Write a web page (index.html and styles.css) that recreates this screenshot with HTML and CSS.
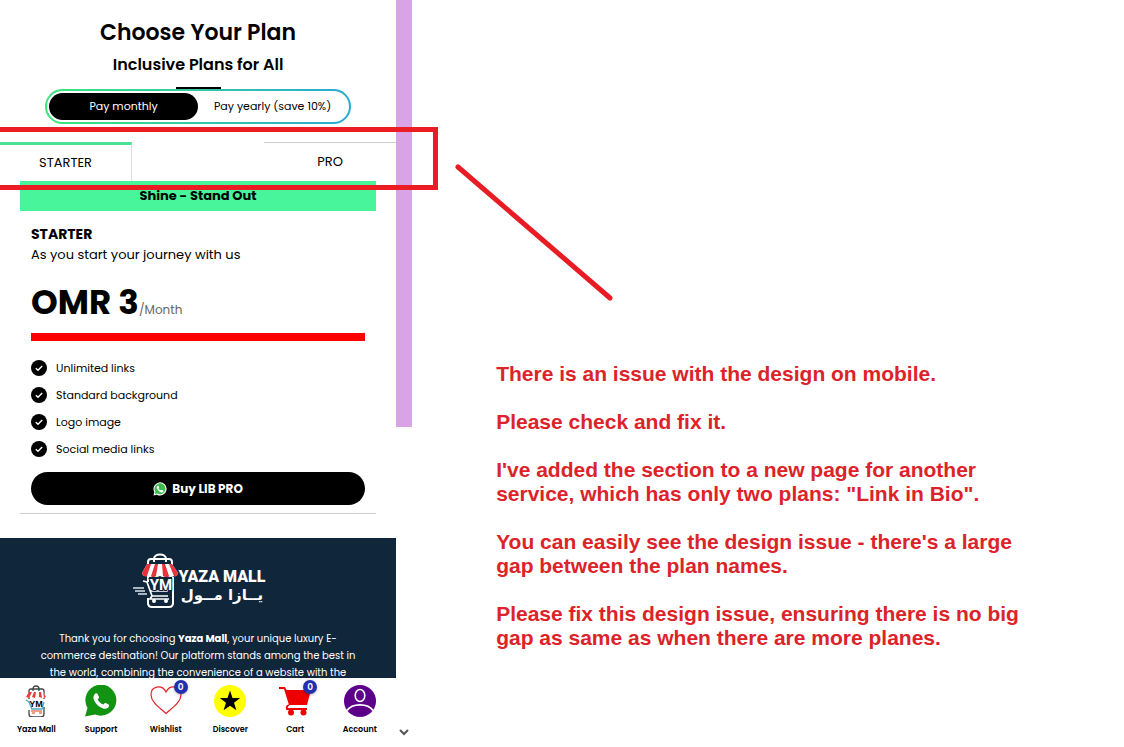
FILE: index.html
```html
<!DOCTYPE html>
<html lang="en">
<head>
<meta charset="utf-8">
<meta name="viewport" content="width=device-width, initial-scale=1">
<title>Choose Your Plan</title>
<link rel="stylesheet" href="styles.css">
</head>
<body>
<svg class="symbols" aria-hidden="true">
  <symbol id="check" viewBox="0 0 16 16">
    <circle cx="8" cy="8" r="8" fill="#000"/>
    <path d="M4.8 8.2 7 10.3 11.2 6" fill="none" stroke="#fff" stroke-width="1.4"/>
  </symbol>
  <symbol id="handset" viewBox="0 0 32 32">
    <path d="M9.500 9.500C10.500 8 12 8 12.700 9.200L14 12C14.300 13 13.200 13.800 12.700 14.600C14 17 15.700 18.600 18.200 19.600C19 18.900 19.800 17.600 20.700 18L23.600 19.500C24.500 20.200 24 22.200 22.700 23.100C20.500 24.600 17.600 23.600 15 22C12 20 10 17.500 8.900 15C8 12.800 8.400 10.900 9.500 9.500Z"/>
  </symbol>
</svg>

<div class="page">
  <div class="phone">
    <main class="screen">
      <section class="plans">
        <h1 class="title">Choose Your Plan</h1>
        <h2 class="subtitle">Inclusive Plans for All</h2>
        <div class="rule"></div>
        <div class="billing">
          <button class="billing-option billing-active" type="button">Pay monthly</button>
          <button class="billing-option" type="button">Pay yearly (save 10%)</button>
        </div>
        <div class="tabs" role="tablist">
          <button class="tab tab-active" type="button" role="tab" aria-selected="true">STARTER</button>
          <span></span>
          <button class="tab" type="button" role="tab" aria-selected="false">PRO</button>
        </div>
        <article class="card">
          <div class="ribbon">Shine - Stand Out</div>
          <div class="card-body">
            <h3 class="plan-name">STARTER</h3>
            <p class="plan-text">As you start your journey with us</p>
            <p class="price"><strong class="amount">OMR 3</strong><span class="period">/Month</span></p>
            <div class="bar"></div>
            <ul class="features">
              <li class="feature"><svg class="check"><use href="#check"/></svg>Unlimited links</li>
              <li class="feature"><svg class="check"><use href="#check"/></svg>Standard background</li>
              <li class="feature"><svg class="check"><use href="#check"/></svg>Logo image</li>
              <li class="feature"><svg class="check"><use href="#check"/></svg>Social media links</li>
            </ul>
            <button class="buy" type="button">
              <svg class="buy-icon" viewBox="0 0 32 32" aria-hidden="true">
                <path d="M1 31 3 23A15 15 0 1 1 9 29Z" fill="#fff"/>
                <path d="M4 28 5.500 22.500A12.500 12.500 0 1 1 9.800 26.500Z" fill="#3dbb4e"/>
                <use href="#handset" fill="#fff"/>
              </svg>
              Buy LIB PRO
            </button>
          </div>
        </article>
      </section>

      <footer class="footer">
        <svg class="logo" viewBox="0 0 136 58" role="img" aria-label="Yaza Mall">
          <path d="M24 10V7C24 1 36 1 36 7V10M18 30V10Q18 7 21 7H39Q42 7 42 10V14M43 25V51Q43 55 39 55H22Q18 55 18 51V46" fill="none" stroke="#fff" stroke-width="2"/>
          <path d="M17 12H42L48 21Q47 25 44 24Q41 26 37 24Q33 26 30 24Q26 26 23 24Q20 26 17 24Q13 25 12 21Z" fill="#fff"/>
          <path d="M17 12H21L17 24Q13 25 12 21ZM25 12H28L26 24Q23 26 21 24ZM32 12H35L39 24Q36 26 33 24ZM39 12H42L48 21Q47 25 44 24Z" fill="#e8333b"/>
          <path d="M3 36H14M5 39H15M8 42H17" stroke="#aab5bf" stroke-width="2"/>
          <path d="M13 29 17 30 22 44H38M20 39H37L41 31M22 44 20 47H39" fill="none" stroke="#fff" stroke-width="1.700"/>
          <circle cx="24" cy="49" r="2" fill="#fff"/><circle cx="36" cy="49" r="2" fill="#fff"/>
          <text class="logo-mark" x="31" y="38" text-anchor="middle">YM</text>
          <text class="logo-name" x="92" y="30" text-anchor="middle">YAZA MALL</text>
          <text class="logo-arabic" x="92" y="48" text-anchor="middle">يــازا مــول</text>
        </svg>
        <p class="about">Thank you for choosing <b>Yaza Mall</b>, your unique luxury E-<br>commerce destination! Our platform stands among the best in<br>the world, combining the convenience of a website with the</p>
      </footer>
    </main>

    <nav class="dock">
      <a class="dock-item" href="#">
        <svg class="dock-icon" viewBox="0 0 32 32" aria-hidden="true">
          <path d="M13 6V4Q13 1 16 1T19 4V6M9 14V6Q9 4 11 4H22Q24 4 24 6V14M24 22V29Q24 32 21 32H12Q9 32 9 29V25" fill="none" stroke="#444" stroke-width="1.300"/>
          <path d="M9 7H23L26 12Q25 14 22 12Q19 14 16 12Q13 14 10 12Q7 14 6 12Z" fill="#fff"/>
          <path d="M9 7H12L9 13 6 12ZM14 7H16L15 13 12 12ZM19 7H21L22 13 19 12ZM23 7 26 12 24 13Z" fill="#e93a3d"/>
          <path d="M6 15 9 17 12 24H22L24 17" fill="none" stroke="#4aa8c8" stroke-width="1.300"/>
          <path d="M11 26H22M12 28H15M19 28H22" stroke="#ef7d55" stroke-width="1.300"/>
          <text class="dock-mark" x="16" y="22" text-anchor="middle">YM</text>
        </svg>
        <span>Yaza Mall</span>
      </a>
      <a class="dock-item" href="#">
        <svg class="dock-icon" viewBox="0 0 32 32" aria-hidden="true">
          <path d="M0 31.500 2.500 23A15.500 15.500 0 1 1 10 29.500Z" fill="#129412"/>
          <use href="#handset" fill="#fff"/>
        </svg>
        <span>Support</span>
      </a>
      <a class="dock-item" href="#">
        <svg class="dock-icon" viewBox="0 0 32 32" aria-hidden="true">
          <path d="M16 28.500C11 23.500 1 18 1 9.500C1 1 12 -1 16 7C20 -1 31 1 31 9.500C31 18 21 23.500 16 28.500Z" fill="#fff" stroke="#e8222a" stroke-width="1.200"/>
        </svg>
        <span class="badge">0</span>
        <span>Wishlist</span>
      </a>
      <a class="dock-item" href="#">
        <svg class="dock-icon" viewBox="0 0 32 32" aria-hidden="true">
          <circle cx="16" cy="16" r="16" fill="#ff0"/>
          <path d="M16 5.500 18.500 13H26.200L20 17.700 22.400 25.300 16 20.700 9.600 25.300 12 17.700 5.800 13H13.500Z" fill="#000"/>
        </svg>
        <span>Discover</span>
      </a>
      <a class="dock-item" href="#">
        <svg class="dock-icon" viewBox="0 0 32 32" aria-hidden="true">
          <path d="M0 2H6L7.500 5H32L28 20H10L5 4H0Z" fill="#ee0000"/>
          <path d="M10 20Q7 21 8 24H28" fill="none" stroke="#ee0000" stroke-width="1.800"/>
          <circle cx="12" cy="27.500" r="3" fill="#ee0000"/><circle cx="24.500" cy="27.500" r="3" fill="#ee0000"/>
        </svg>
        <span class="badge">0</span>
        <span>Cart</span>
      </a>
      <a class="dock-item" href="#">
        <svg class="dock-icon" viewBox="0 0 32 32" aria-hidden="true">
          <circle cx="16" cy="16" r="16" fill="#5d0089"/>
          <ellipse cx="16" cy="10.500" rx="4.800" ry="6" fill="none" stroke="#fff" stroke-width="1.600"/>
          <path d="M3 25.500C8 18 24 18 29 25.500" fill="none" stroke="#fff" stroke-width="1.800"/>
        </svg>
        <span>Account</span>
      </a>
    </nav>

    <div class="scrollbar">
      <div class="thumb"></div>
      <svg class="arrow" viewBox="0 0 10 8" aria-hidden="true"><path d="M1 2 5 6 9 2" fill="none" stroke="#555" stroke-width="2"/></svg>
    </div>
  </div>

  <aside class="notes">
    <p class="note">There is an issue with the design on mobile.</p>
    <p class="note">Please check and fix it.</p>
    <p class="note">I've added the section to a new page for another<br>service, which has only two plans: "Link in Bio".</p>
    <p class="note">You can easily see the design issue - there's a large<br>gap between the plan names.</p>
    <p class="note">Please fix this design issue, ensuring there is no big<br>gap as same as when there are more planes.</p>
  </aside>

  <div class="highlight"></div>
  <svg class="pointer" viewBox="0 0 160 140" aria-hidden="true"><path d="M4 4 156 135" stroke="#e81c24" stroke-width="5" stroke-linecap="round"/></svg>
</div>
</body>
</html>
```

FILE: styles.css
```css
* {
  box-sizing: border-box;
}

body,
h1,
h2,
h3,
p,
ul {
  margin: 0;
  padding: 0;
}

body {
  background: #fff;
  color: #000;
  font-family: Poppins, Inter, sans-serif;
}

button {
  border: 0;
  background: none;
  padding: 0;
  color: inherit;
  font-family: inherit;
}

.symbols {
  position: absolute;
  width: 0;
  height: 0;
}

.page {
  position: relative;
  display: grid;
  grid-template-columns: minmax(0, 11fr) minmax(0, 19fr);
  height: 100vh;
  overflow: hidden;
}

.phone {
  display: grid;
  grid-template-columns: minmax(0, 1fr) 16px;
  grid-template-rows: minmax(0, 1fr) auto;
  min-height: 0;
}

.screen {
  overflow: hidden;
}

.plans {
  display: flex;
  flex-direction: column;
  align-items: center;
  padding: 16px 0 24px;
}

.title {
  font-size: 22px;
  line-height: 34px;
  font-weight: 600;
}

.subtitle {
  margin-top: 3px;
  font-size: 16px;
  line-height: 24px;
  font-weight: 600;
}

.rule {
  width: 45px;
  height: 2px;
  margin-top: 10px;
  background: #000;
}

.billing {
  display: grid;
  grid-template-columns: 1fr 1fr;
  width: 306px;
  height: 35px;
  padding: 2px;
  border: 2px solid transparent;
  border-radius: 18px;
  background: linear-gradient(#fff, #fff) padding-box, linear-gradient(90deg, #3be67b, #2aa9d2) border-box;
}

.billing-option {
  border-radius: 14px;
  font-size: 11px;
}

.billing-active {
  background: #000;
  color: #fff;
}

.tabs {
  display: grid;
  grid-template-columns: repeat(3, 1fr);
  align-self: stretch;
  height: 39px;
  margin-top: 18px;
}

.tab {
  border-top: 1px solid #ccc;
  font-size: 13px;
}

.tab-active {
  border-top: 3px solid #4ae096;
  border-right: 1px solid #ddd;
}

.card {
  align-self: stretch;
  margin: 0 20px;
  padding-bottom: 8px;
  border-bottom: 1px solid #ccc;
}

.ribbon {
  background: #48f59b;
  font-size: 13px;
  line-height: 30px;
  font-weight: 700;
  text-align: center;
}

.card-body {
  padding: 13px 11px 0;
}

.plan-name {
  font-size: 14px;
  line-height: 21px;
  font-weight: 700;
}

.plan-text {
  font-size: 13px;
  line-height: 20px;
}

.price {
  display: flex;
  align-items: baseline;
  margin-top: 13px;
}

.amount {
  font-size: 34px;
  line-height: 48px;
  font-weight: 700;
}

.period {
  color: #666;
  font-size: 12px;
  line-height: 16px;
}

.bar {
  height: 8px;
  margin-top: 7px;
  background: #f00;
}

.features {
  display: grid;
  gap: 11px;
  margin-top: 19px;
  list-style: none;
}

.feature {
  display: flex;
  align-items: center;
  gap: 9px;
  font-size: 11px;
  line-height: 16px;
}

.check {
  width: 16px;
  height: 16px;
}

.buy {
  display: flex;
  align-items: center;
  justify-content: center;
  gap: 5px;
  width: 100%;
  height: 33px;
  margin-top: 15px;
  border-radius: 17px;
  background: #000;
  color: #fff;
  font-size: 12px;
  font-weight: 700;
}

.buy-icon {
  width: 14px;
  height: 14px;
}

.footer {
  display: flex;
  flex-direction: column;
  align-items: center;
  padding-top: 14px;
  background: #10263a;
  color: #fff;
}

.logo {
  width: 136px;
  height: 58px;
}

.logo-mark {
  fill: #fff;
  stroke: #10263a;
  stroke-width: 2px;
  paint-order: stroke;
  font: 700 15px Roboto, sans-serif;
}

.logo-name {
  fill: #fff;
  font: 900 16px Roboto, sans-serif;
}

.logo-arabic {
  fill: #fff;
  font: 700 15px "DejaVu Sans", sans-serif;
}

.about {
  margin-top: 20px;
  font-size: 10px;
  line-height: 17px;
  text-align: center;
  white-space: nowrap;
}

.dock {
  display: grid;
  grid-template-columns: repeat(6, 1fr);
  grid-row: 2;
  height: 69px;
  padding: 7px 4px 0;
  background: #fff;
}

.dock-item {
  position: relative;
  display: flex;
  flex-direction: column;
  align-items: center;
  gap: 7px;
  color: #000;
  font-size: 8px;
  line-height: 12px;
  font-weight: 600;
  text-decoration: none;
}

.dock-icon {
  width: 32px;
  height: 32px;
}

.dock-mark {
  font: 700 9px "Liberation Sans", sans-serif;
}

.badge {
  position: absolute;
  top: -5px;
  left: calc(50% + 8px);
  width: 14px;
  border-radius: 50%;
  background: #222fae;
  color: #fff;
  font-size: 9px;
  line-height: 14px;
  text-align: center;
  box-shadow: 0 1px 3px #0004;
}

.scrollbar {
  display: flex;
  flex-direction: column;
  justify-content: space-between;
  align-items: center;
  grid-area: 1 / 2 / 3 / 3;
  padding-bottom: 11px;
}

.thumb {
  width: 100%;
  height: 58%;
  background: #d9a3e8;
}

.arrow {
  width: 10px;
  height: 8px;
}

.notes {
  display: flex;
  flex-direction: column;
  gap: 24px;
  padding: 362px 16px 0 84px;
  color: #dc2329;
  font-family: "Liberation Sans", Arial, sans-serif;
  font-size: 21px;
  line-height: 24px;
  font-weight: 700;
}

.highlight {
  position: absolute;
  top: 127px;
  left: -5px;
  width: 443px;
  height: 63px;
  border: 5px solid #ec1c24;
}

.pointer {
  position: absolute;
  top: 163px;
  left: 454px;
  width: 160px;
  height: 140px;
}
```
